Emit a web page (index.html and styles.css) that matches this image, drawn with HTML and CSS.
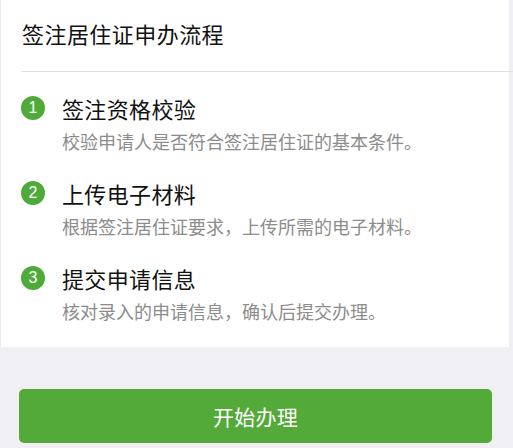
FILE: index.html
```html
<!DOCTYPE html>
<html lang="zh-CN">
<head>
<meta charset="utf-8">
<title>签注居住证申办流程</title>
<link rel="stylesheet" href="styles.css">
</head>
<body>
<div class="card">
  <div class="header">签注居住证申办流程</div>
  <div class="divider"></div>
  <ol class="steps">
    <li class="step">
      <div class="step-head"><span class="num">1</span><span class="step-title">签注资格校验</span></div>
      <div class="step-desc">校验申请人是否符合签注居住证的基本条件。</div>
    </li>
    <li class="step">
      <div class="step-head"><span class="num">2</span><span class="step-title">上传电子材料</span></div>
      <div class="step-desc">根据签注居住证要求，上传所需的电子材料。</div>
    </li>
    <li class="step">
      <div class="step-head"><span class="num">3</span><span class="step-title">提交申请信息</span></div>
      <div class="step-desc">核对录入的申请信息，确认后提交办理。</div>
    </li>
  </ol>
</div>
<div class="actions">
  <button class="btn">开始办理</button>
</div>
</body>
</html>
```
FILE: styles.css
```css
html, body {
  margin: 0;
  padding: 0;
}
body {
  background: #efeff4;
  font-family: "Noto Sans CJK SC", "Noto Sans", sans-serif;
  width: 513px;
  height: 448px;
  overflow: hidden;
}
.card {
  background: #fff;
  margin-right: 4px;
  border-left: 1px solid #ececec;
}
.header {
  height: 71px;
  box-sizing: border-box;
  padding: 17px 0 0 21px;
  font-size: 22px;
  line-height: 32px;
  letter-spacing: 0.45px;
  color: #111;
}
.divider {
  height: 1px;
  background: #e2e2e2;
  margin-left: 20px;
  margin-right: -4px;
}
.steps {
  list-style: none;
  margin: 0;
  padding: 21px 0 24px 20px;
  display: flex;
  flex-direction: column;
  gap: 25px;
}
.step {
  display: flex;
  flex-direction: column;
  gap: 6px;
}
.step-head {
  display: flex;
  align-items: center;
  gap: 17px;
  height: 30px;
}
.num {
  width: 24px;
  height: 24px;
  border-radius: 50%;
  background: #4fab39;
  color: #fff;
  font-family: "Liberation Sans", Arial, sans-serif;
  font-size: 16px;
  line-height: 24px;
  text-align: center;
  flex: none;
}
.step-title {
  font-size: 22px;
  line-height: 30px;
  letter-spacing: 0.35px;
  color: #111;
}
.step-desc {
  padding-left: 41px;
  font-size: 18px;
  line-height: 24px;
  color: #8c8c8c;
}
.actions {
  padding: 42px 21px 0 19px;
}
.btn {
  display: block;
  width: 100%;
  height: 54px;
  border: none;
  border-radius: 5px;
  background: #53aa38;
  color: #fff;
  font-family: "Noto Sans CJK SC", "Noto Sans", sans-serif;
  font-size: 21px;
  letter-spacing: 0.3px;
  padding: 0;
}
```
